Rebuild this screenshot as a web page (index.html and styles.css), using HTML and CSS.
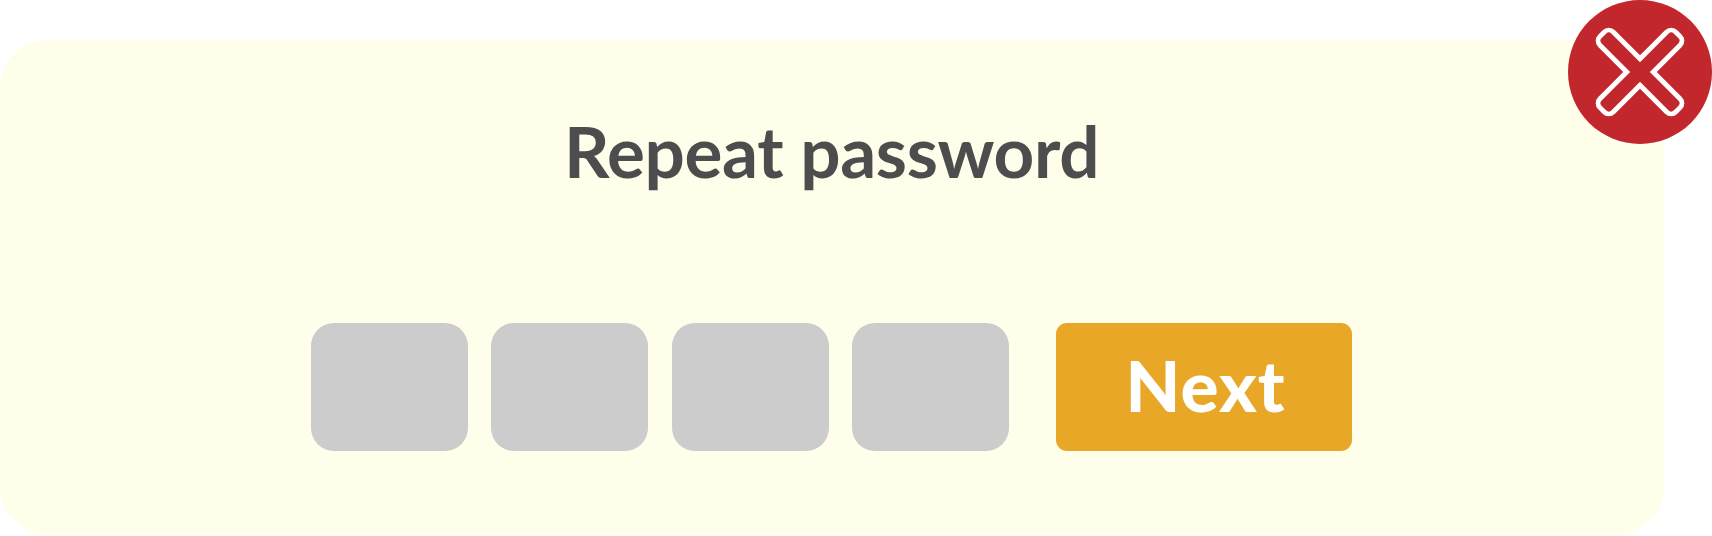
FILE: index.html
```html
<!DOCTYPE html>
<html lang="en">
<head>
<meta charset="utf-8">
<title>Repeat password</title>
<link rel="stylesheet" href="styles.css">
</head>
<body>
<main class="dialog">
  <h1 class="title">Repeat password</h1>
  <form class="entry">
    <div class="digits">
      <span class="digit"></span>
      <span class="digit"></span>
      <span class="digit"></span>
      <span class="digit"></span>
    </div>
    <button class="next" type="button">Next</button>
  </form>
  <button class="close" type="button" aria-label="Close">
    <svg class="close-icon" viewBox="0 0 144 144">
      <circle cx="72" cy="72" r="72" fill="#c1272d"/>
      <g transform="rotate(45 72 72)">
        <path d="M24.8 62.6H62.6V24.8a6.3 6.3 0 0 1 6.3-6.3h6.2a6.3 6.3 0 0 1 6.3 6.3V62.6H119.2a6.3 6.3 0 0 1 6.3 6.3v6.2a6.3 6.3 0 0 1-6.3 6.3H81.4V119.2a6.3 6.3 0 0 1-6.3 6.3h-6.2a6.3 6.3 0 0 1-6.3-6.3V81.4H24.8a6.3 6.3 0 0 1-6.3-6.3v-6.2a6.3 6.3 0 0 1 6.3-6.3Z" fill="none" stroke="#fff" stroke-width="4.9" stroke-miterlimit="10"/>
      </g>
    </svg>
  </button>
</main>
</body>
</html>
```
FILE: styles.css
```css
* { box-sizing: border-box; }
body { margin: 0; padding-top: 40px; background: #fff; overflow: hidden; }
.dialog {
  position: relative;
  width: 1664px;
  height: 495px;
  padding-top: 68px;
  border-radius: 48px;
  background: #fffeeb;
  font-family: Lato, "Liberation Sans", sans-serif;
}
.title {
  height: 86px;
  margin: 0 0 129px 564px;
  color: #4d4d4d;
  font-size: 71px;
  line-height: 86px;
  font-weight: 700;
  letter-spacing: -0.35px;
  white-space: nowrap;
}
.entry { display: flex; gap: 47px; padding-left: 311px; }
.digits { display: flex; gap: 23.35px; }
.digit { width: 157px; height: 128px; border-radius: 23px; background: #ccc; }
.next {
  width: 296px;
  height: 128px;
  padding: 0 0 4px 3px;
  border: 0;
  border-radius: 11px;
  background: #e8a726;
  color: #fff;
  font: 900 71px/124px Lato, "Liberation Sans", sans-serif;
  letter-spacing: 1px;
}
.close {
  position: absolute;
  top: -40px;
  right: -48px;
  width: 144px;
  height: 144px;
  padding: 0;
  border: 0;
  background: none;
}
.close-icon { display: block; width: 144px; height: 144px; }
```
